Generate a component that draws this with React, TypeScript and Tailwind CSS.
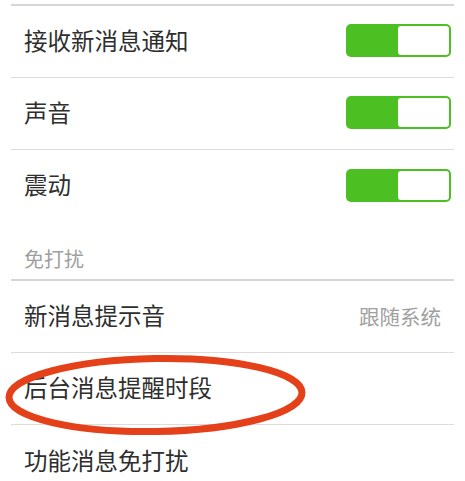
import React from "react";

const font = { fontFamily: '"Noto Sans CJK SC", "Noto Sans", sans-serif' };

function Toggle() {
  return (
    <div className="w-[105px] h-[33px] rounded-[5px] bg-[#4cbf22] p-[2px] flex justify-end">
      <div className="w-[51px] h-full rounded-[3px] bg-white" />
    </div>
  );
}

function ToggleRow({ label, border }: { label: string; border: boolean }) {
  return (
    <div
      className={`h-[72px] flex items-center justify-between pl-[13px] pr-[3px] pb-[2px] ${
        border ? "border-b border-[#dcdcdc]" : ""
      }`}
    >
      <span className="text-[23.5px] leading-none text-[#2e2e2e]">{label}</span>
      <Toggle />
    </div>
  );
}

function TextRow({ label, value, border }: { label: string; value?: string; border: boolean }) {
  return (
    <div
      className={`h-[72px] flex items-center justify-between pl-[13px] pr-[13px] pb-[1px] ${
        border ? "border-b border-[#dcdcdc]" : ""
      }`}
    >
      <span className="text-[23.5px] leading-none text-[#2e2e2e]">{label}</span>
      {value && <span className="text-[20.5px] leading-none text-[#a0a0a0]">{value}</span>}
    </div>
  );
}

export default function App() {
  return (
    <div className="relative w-[465px] h-[481px] overflow-hidden bg-white pt-[4px]" style={font}>
      <div className="mx-[11px] border-t-2 border-[#d6d6d6]">
        <ToggleRow label="接收新消息通知" border />
        <ToggleRow label="声音" border />
        <ToggleRow label="震动" border={false} />
        <div className="h-[59px] pt-[17px] pl-[13px] flex items-center border-b-2 border-[#d6d6d6]">
          <span className="text-[20px] leading-none text-[#a0a0a0]">免打扰</span>
        </div>
        <TextRow label="新消息提示音" value="跟随系统" border />
        <TextRow label="后台消息提醒时段" border />
        <TextRow label="功能消息免打扰" border={false} />
      </div>
      <svg
        className="absolute left-0 top-0 pointer-events-none"
        width="465"
        height="481"
        viewBox="0 0 465 481"
      >
        <ellipse
          cx="155.5"
          cy="395"
          rx="146.5"
          ry="36.5"
          fill="none"
          stroke="#e4401a"
          strokeWidth="7"
          transform="rotate(-1 155.5 395)"
        />
      </svg>
    </div>
  );
}
